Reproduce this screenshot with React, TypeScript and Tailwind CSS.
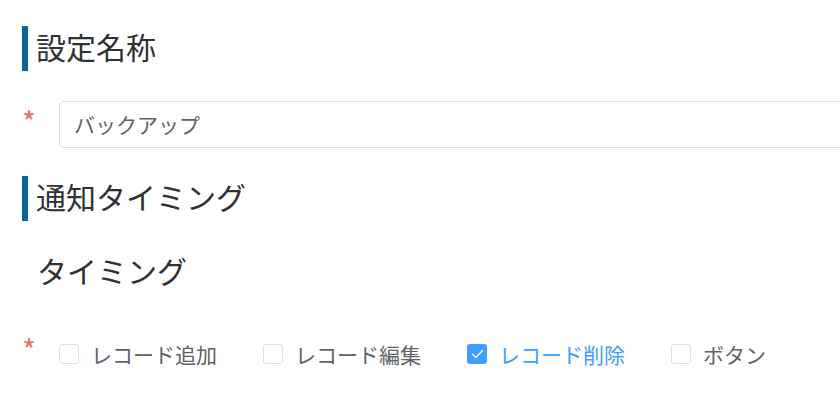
import React from "react";

const font = { fontFamily: '"Noto Sans CJK JP", "Noto Sans", sans-serif' };

function Check({ checked }: { checked?: boolean }) {
  return checked ? (
    <span className="flex h-[20px] w-[20px] shrink-0 items-center justify-center rounded-[3px] bg-[#409eff]">
      <svg width="13" height="10" viewBox="0 0 13 10" fill="none">
        <path d="M1.5 5.2 L5 8.5 L11.5 1.5" stroke="white" strokeWidth="1.4" strokeLinecap="round" strokeLinejoin="round" />
      </svg>
    </span>
  ) : (
    <span className="h-[20px] w-[20px] shrink-0 rounded-[3px] border border-[#dcdfe6] bg-white" />
  );
}

function Item({ label, checked }: { label: string; checked?: boolean }) {
  return (
    <label className="mr-[46px] flex shrink-0 items-center">
      <Check checked={checked} />
      <span className={`ml-[12px] text-[21px] leading-[28px] ${checked ? "text-[#409eff]" : "text-[#606266]"}`}>{label}</span>
    </label>
  );
}

export default function App() {
  return (
    <div className="h-[415px] w-full overflow-hidden bg-white pl-[22px] pt-[26px]" style={font}>
      <div className="flex h-[45px] items-center border-l-[6px] border-[#0d6496] pb-[5px] pl-[8px] text-[30px] leading-[40px] text-[#303133]">
        設定名称
      </div>
      <div className="mt-[30px] flex items-start">
        <span className="w-[37px] shrink-0 pt-[5px] text-[30px] leading-[30px] text-[#f56c6c]">*</span>
        <div className="flex h-[47px] w-[900px] shrink-0 items-center rounded-[5px] border border-[#dcdfe6] pl-[14px] text-[21px] text-[#606266]">
          バックアップ
        </div>
      </div>
      <div className="mt-[28px] flex h-[45px] items-center border-l-[6px] border-[#0d6496] pb-[5px] pl-[8px] text-[30px] leading-[40px] text-[#303133]">
        通知タイミング
      </div>
      <div className="mt-[29px] pl-[15px] text-[30px] leading-[40px] text-[#303133]">タイミング</div>
      <div className="mt-[48px] flex items-start">
        <span className="-mt-[4px] w-[37px] shrink-0 text-[30px] leading-[30px] text-[#f56c6c]">*</span>
        <div className="mt-[2px] flex items-center">
          <Item label="レコード追加" />
          <Item label="レコード編集" />
          <Item label="レコード削除" checked />
          <Item label="ボタン" />
        </div>
      </div>
    </div>
  );
}
